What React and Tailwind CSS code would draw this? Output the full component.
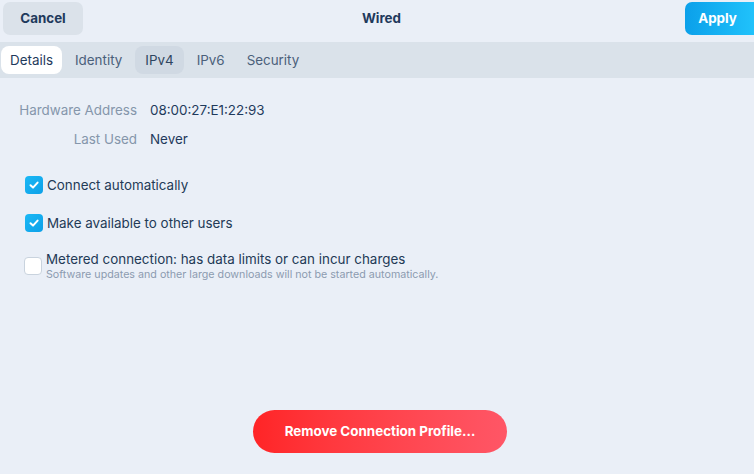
import React, { useState } from 'react';

function Check({ checked }) {
  if (checked) {
    return (
      <span className="w-[18px] h-[18px] rounded-[4px] bg-gradient-to-br from-[#1ab8f5] to-[#0ea0e8] flex items-center justify-center shrink-0">
        <svg width="12" height="12" viewBox="0 0 12 12" fill="none">
          <path d="M2.5 6.3 L5 8.6 L9.6 3.6" stroke="white" strokeWidth="2" strokeLinecap="round" strokeLinejoin="round" />
        </svg>
      </span>
    );
  }
  return <span className="w-[18px] h-[18px] rounded-[4px] bg-white border border-[#c9d3de] shrink-0" />;
}

export default function App() {
  const [tab, setTab] = useState('Details');
  const tabs = ['Details', 'Identity', 'IPv4', 'IPv6', 'Security'];

  return (
    <div className="w-[754px] h-[474px] flex flex-col bg-[#eaeff7] text-[#233a56] overflow-hidden" style={{ fontFamily: 'Inter, "Noto Sans", sans-serif' }}>
      {/* Header */}
      <div className="h-[42px] grid grid-cols-[1fr_auto_1fr] items-start pt-[2px] pl-[3px]">
        <div>
          <button className="w-[80px] h-[33px] rounded-[7px] bg-[#dbe2ea] text-[13.4px] font-bold text-[#1f3a5c]">Cancel</button>
        </div>
        <div className="h-[33px] flex items-center text-[13.4px] font-bold text-[#1f3a5c] pl-[6px]">Wired</div>
        <div className="flex justify-end">
          <button className="w-[69px] h-[33px] rounded-l-[7px] bg-gradient-to-r from-[#0ba0ea] to-[#20c2fb] text-[13.4px] font-bold text-white pr-[4px]">Apply</button>
        </div>
      </div>

      {/* Tabs */}
      <div className="h-[36px] bg-[#dae2ea] flex items-center pl-[1px] gap-[4px] text-[13.4px]">
        {tabs.map((t) => (
          <button
            key={t}
            onClick={() => setTab(t)}
            className={
              'h-[28px] px-[9px] rounded-[8px] ' +
              (t === 'Details'
                ? 'bg-white text-[#1f3a5c]'
                : t === 'IPv4'
                ? 'bg-[#d0d9e3] text-[#2e4560] px-[10px]'
                : 'text-[#4b607a]')
            }
          >
            {t}
          </button>
        ))}
      </div>

      {/* Body */}
      <div className="flex-1 flex flex-col pt-[23px]">
        <div className="grid grid-cols-[137px_1fr] gap-x-[13px] gap-y-[11px] text-[13.4px] leading-[18px]">
          <div className="text-right text-[#8596ab]">Hardware Address</div>
          <div className="text-[#1f3a5c]">08:00:27:E1:22:93</div>
          <div className="text-right text-[#8596ab]">Last Used</div>
          <div className="text-[#1f3a5c]">Never</div>
        </div>

        <div className="flex flex-col pl-[25px] mt-[28px] text-[13.4px]">
          <label className="flex items-center gap-[4px] h-[18px]">
            <Check checked />
            <span>Connect automatically</span>
          </label>
          <label className="flex items-center gap-[4px] h-[18px] mt-[20px]">
            <Check checked />
            <span>Make available to other users</span>
          </label>
          <label className="flex items-center gap-[4px] mt-[19px] -ml-[1px]">
            <Check checked={false} />
            <span className="flex flex-col">
              <span className="leading-[17px]">Metered connection: has data limits or can incur charges</span>
              <span className="text-[10.7px] leading-[13px] text-[#8c9bb0]">Software updates and other large downloads will not be started automatically.</span>
            </span>
          </label>
        </div>

        <div className="flex-1" />
        <div className="flex justify-center pb-[21px] pl-[6px]">
          <button className="w-[254px] h-[43px] rounded-full bg-gradient-to-r from-[#ff2426] to-[#ff5666] text-white text-[13.4px] font-bold">
            Remove Connection Profile…
          </button>
        </div>
      </div>
    </div>
  );
}
